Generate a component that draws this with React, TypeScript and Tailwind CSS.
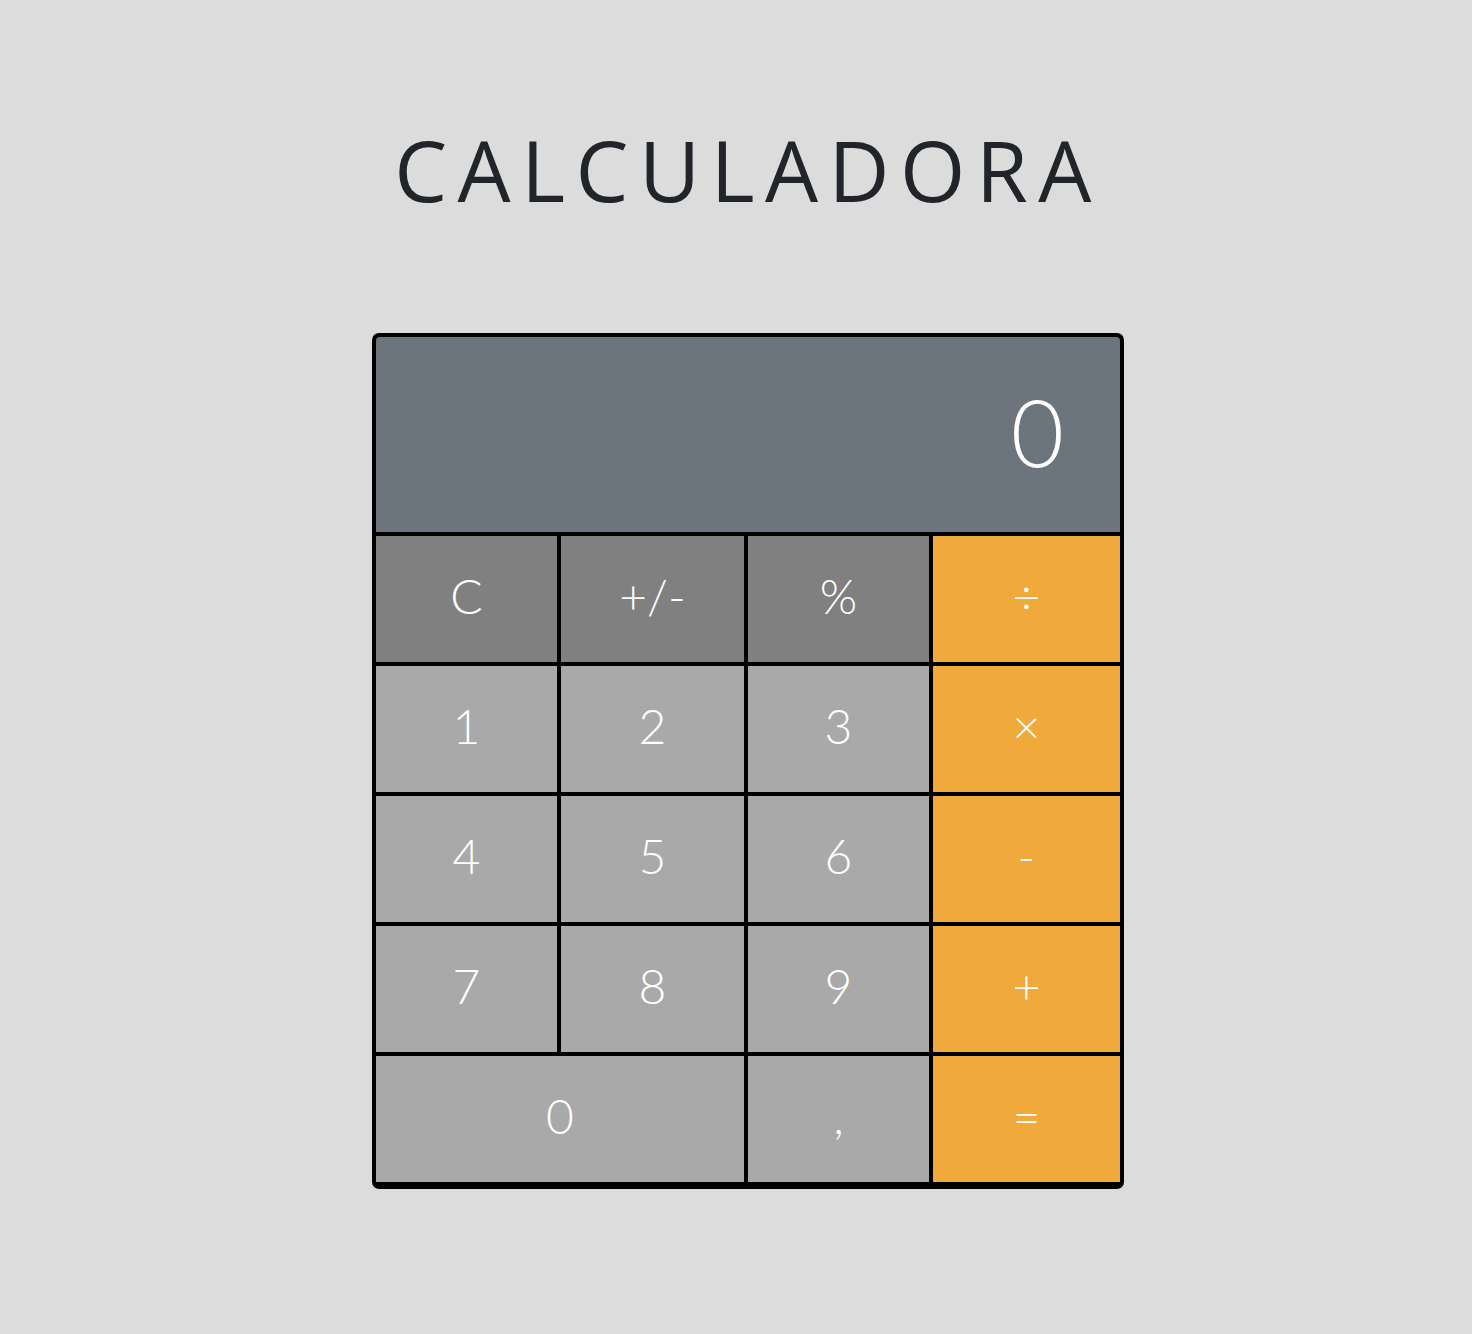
import { useState } from "react";

type Key = { label: string; kind: "fn" | "num" | "op"; wide?: boolean };

const keys: Key[] = [
  { label: "C", kind: "fn" },
  { label: "+/-", kind: "fn" },
  { label: "%", kind: "fn" },
  { label: "÷", kind: "op" },
  { label: "1", kind: "num" },
  { label: "2", kind: "num" },
  { label: "3", kind: "num" },
  { label: "×", kind: "op" },
  { label: "4", kind: "num" },
  { label: "5", kind: "num" },
  { label: "6", kind: "num" },
  { label: "-", kind: "op" },
  { label: "7", kind: "num" },
  { label: "8", kind: "num" },
  { label: "9", kind: "num" },
  { label: "+", kind: "op" },
  { label: "0", kind: "num", wide: true },
  { label: ",", kind: "num" },
  { label: "=", kind: "op" },
];

const keyColor = {
  fn: "bg-[#808080]",
  num: "bg-[#a9a9a9]",
  op: "bg-[#f0aa3c]",
};

export default function App() {
  const [display, setDisplay] = useState("0");

  const press = (k: Key) => {
    // just enough behaviour for the screenshot
    if (k.label === "C") setDisplay("0");
    else if (k.kind === "num") setDisplay((d) => (d === "0" ? k.label : d + k.label));
  };

  return (
    <div className="min-h-screen bg-[#dcdcdc] flex flex-col items-center pl-[24px] font-['Lato',sans-serif]">
      {/* ── TITLE ── */}
      <h1 className="mt-[128px] text-[84px] leading-none font-normal tracking-[0.125em] text-[#212529] font-['Open_Sans',sans-serif]">
        CALCULADORA
      </h1>

      {/* ── CALCULATOR ── */}
      <div className="mt-[121px] w-[752px] bg-black rounded-[7px] p-[4px] pb-[7px] flex flex-col gap-[4px]">
        <div className="h-[195px] bg-[#6c757d] rounded-t-[4px] flex items-center justify-end pr-[56px] pb-[6px]">
          <span className="text-[92px] font-light text-white leading-none">{display}</span>
        </div>

        <div className="grid grid-cols-[181px_183px_181px_187px] auto-rows-[126px] gap-[4px]">
          {keys.map((k, idx) => (
            <button
              key={idx}
              onClick={() => press(k)}
              className={`${keyColor[k.kind]} ${k.wide ? "col-span-2" : ""} flex items-center justify-center pb-[6px] text-white text-[48px] font-light leading-none`}
            >
              {k.label}
            </button>
          ))}
        </div>
      </div>
    </div>
  );
}
